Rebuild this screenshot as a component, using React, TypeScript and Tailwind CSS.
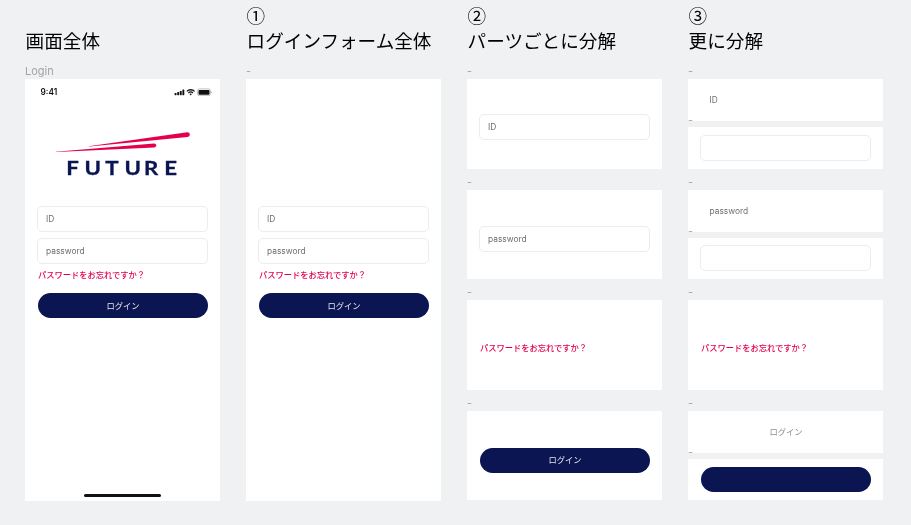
import type { ReactNode } from 'react';

const SANS = "font-['Inter','Noto_Sans_CJK_JP',sans-serif]";
const JP = "font-['Noto_Sans_CJK_JP',sans-serif]";

function Heading({ mark, title }: { mark?: string; title: string }) {
  return (
    <h2 className={`${JP} h-[62px] pt-[2px] pl-[0.6px] text-[18.6px] leading-[25px] font-normal whitespace-nowrap text-black`}>
      <span className="block h-[25px]">{mark}</span>
      <span className="block">{title}</span>
    </h2>
  );
}

function FrameLabel({ children }: { children: ReactNode }) {
  return <div className="pt-px text-[11px] leading-[17px] text-[#a2a4a6]">{children}</div>;
}

function Dash() {
  return <span className="block h-[17px] pt-px pl-[0.8px] text-[7px] leading-[17px] text-[#77797b]">–</span>;
}

function Field({ children }: { children?: ReactNode }) {
  return (
    <div className="flex h-[26px] w-[171px] items-center rounded-[5px] border border-[#ebecee] bg-white pl-2 text-[8.4px] leading-none text-[#6c6e70]">
      {children}
    </div>
  );
}

function Forgot() {
  return (
    <a className={`${JP} block pl-px text-[8.25px] leading-[12px] font-medium whitespace-nowrap text-[#e5004f]`}>
      パスワードをお忘れですか？
    </a>
  );
}

function LoginButton({ children }: { children?: ReactNode }) {
  return (
    <div className={`${JP} ml-px flex h-[25px] w-[170px] items-center justify-center rounded-full bg-[#0a1551] pb-[2px] text-[8.3px] leading-none text-[#e4e6ee]`}>
      {children}
    </div>
  );
}

function LoginForm() {
  return (
    <div className="flex flex-col">
      <Field>ID</Field>
      <div className="mt-[6px]">
        <Field>password</Field>
      </div>
      <div className="mt-[4px]">
        <Forgot />
      </div>
      <div className="mt-[13px]">
        <LoginButton>ログイン</LoginButton>
      </div>
    </div>
  );
}

function StatusBar() {
  return (
    <div className="flex h-[25px] items-center justify-between pr-[8px] pl-[15.5px]">
      <span className="text-[8.3px] leading-none font-semibold text-[#111]">9:41</span>
      <svg width="38" height="8" viewBox="0 0 38 8" fill="#111">
        <rect x="0.6" y="4.9" width="1.9" height="2.3" rx="0.4" />
        <rect x="3.2" y="4" width="1.9" height="3.2" rx="0.4" />
        <rect x="5.8" y="2.9" width="1.9" height="4.3" rx="0.4" />
        <rect x="8.4" y="1.6" width="1.9" height="5.6" rx="0.4" />
        <g fill="none" stroke="#111" strokeWidth="1.3">
          <path d="M12.8 3.4a5.4 5.4 0 0 1 7.8 0" />
          <path d="M14.4 5a3.4 3.4 0 0 1 4.6 0" />
        </g>
        <path d="M15.5 6.1a1.8 1.8 0 0 1 2.4 0L16.7 7.5z" />
        <rect x="23.5" y="0.9" width="13" height="6.8" rx="1.9" fill="none" stroke="#b9b9b9" strokeWidth="0.9" />
        <rect x="24.5" y="1.9" width="11" height="4.8" rx="0.9" />
        <path d="M37.1 3.2v2.2c.9-.3.9-1.9 0-2.2z" fill="#aaa" />
      </svg>
    </div>
  );
}

function Logo() {
  return (
    <svg width="140" height="50" viewBox="0 0 140 50" className="ml-[28px]">
      <g fill="#e5004f">
        <path d="M35.5 17.2 134.2 3.2q2.6-.1 2.6 2.3 0 2.2-2.2 2.6L36.5 17.5z" />
        <path d="M2.5 22.8 101 14.4q2.2-.1 2.2 1.9 0 1.9-1.9 2.1L3.5 23.1z" />
      </g>
      <text
        x="11 26.2 43.6 59.5 75.8 92.8"
        y="46"
        transform="scale(1.2 1)"
        fill="#0a1551"
        stroke="#0a1551"
        strokeWidth="0.3"
        className="font-['Lato',sans-serif] text-[18.5px] font-bold"
      >
        FUTURE
      </text>
    </svg>
  );
}

function Card({ pad, children }: { pad: string; children: ReactNode }) {
  return <div className={`h-[89.4px] shrink-0 bg-white pl-[12px] ${pad}`}>{children}</div>;
}

function SplitCard({ top, bottom }: { top: ReactNode; bottom: ReactNode }) {
  return (
    <div className="flex h-[89.4px] shrink-0 flex-col justify-between">
      <div className="relative flex h-[41.7px] items-center bg-white">
        {top}
        <div className="absolute bottom-[-7px] left-0">
          <Dash />
        </div>
      </div>
      <div className="flex h-[41.7px] items-center bg-white pl-[12px]">{bottom}</div>
    </div>
  );
}

function Gap() {
  return (
    <div className="h-[21.15px] pt-[4px]">
      <Dash />
    </div>
  );
}

export default function App() {
  return (
    <main className={`${SANS} flex h-[525px] w-[911px] gap-[26px] overflow-hidden bg-[#f0f1f3] pl-[25px]`}>
      <section className="w-[195px] will-change-transform">
        <Heading title="画面全体" />
        <div className="h-[17.3px]">
          <FrameLabel>Login</FrameLabel>
        </div>
        <div className="flex h-[421.5px] flex-col bg-white">
          <StatusBar />
          <div className="mt-[25px] h-[50px]">
            <Logo />
          </div>
          <div className="mt-[27px] pl-[12px]">
            <LoginForm />
          </div>
          <div className="mt-auto mb-[4px] h-[2.6px] w-[77px] self-center rounded-full bg-[#111]" />
        </div>
      </section>

      <section className="w-[195px] will-change-transform">
        <Heading mark="①" title="ログインフォーム全体" />
        <div className="h-[17.3px]">
          <Dash />
        </div>
        <div className="h-[421.5px] bg-white pt-[127px] pl-[12px]">
          <LoginForm />
        </div>
      </section>

      <section className="w-[195px] will-change-transform">
        <Heading mark="②" title="パーツごとに分解" />
        <div className="h-[17.3px]">
          <Dash />
        </div>
        <Card pad="pt-[35px]">
          <Field>ID</Field>
        </Card>
        <Gap />
        <Card pad="pt-[36px]">
          <Field>password</Field>
        </Card>
        <Gap />
        <Card pad="pt-[41px]">
          <Forgot />
        </Card>
        <Gap />
        <Card pad="pt-[37px]">
          <LoginButton>ログイン</LoginButton>
        </Card>
      </section>

      <section className="w-[195px] will-change-transform">
        <Heading mark="③" title="更に分解" />
        <div className="h-[17.3px]">
          <Dash />
        </div>
        <SplitCard top={<span className="pt-px pl-[21.5px] text-[8.4px] leading-none text-[#6c6e70]">ID</span>} bottom={<Field />} />
        <Gap />
        <SplitCard top={<span className="pt-px pl-[21.5px] text-[8.4px] leading-none text-[#6c6e70]">password</span>} bottom={<Field />} />
        <Gap />
        <Card pad="pt-[41px]">
          <Forgot />
        </Card>
        <Gap />
        <SplitCard
          top={<span className={`${JP} w-full pb-[2px] pl-px text-center text-[8.3px] leading-none text-[#8c8e90]`}>ログイン</span>}
          bottom={<LoginButton />}
        />
      </section>
    </main>
  );
}
